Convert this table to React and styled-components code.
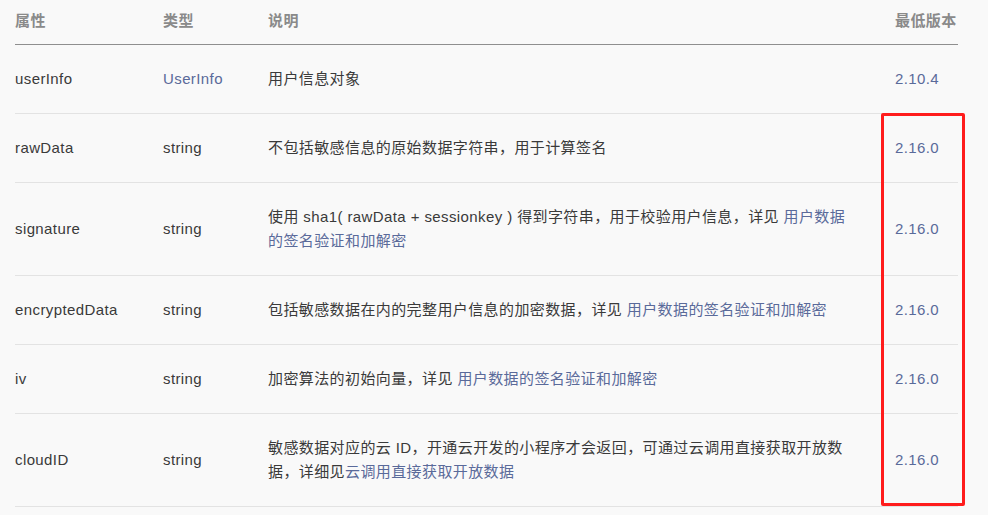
import styled, { createGlobalStyle } from "styled-components";

const GlobalStyle = createGlobalStyle`
  html, body {
    margin: 0;
    padding: 0;
    background: #f9f9f9;
  }
  body {
    font-family: "Liberation Sans", "Noto Sans CJK SC", sans-serif;
    font-size: 15px;
    letter-spacing: 0.4px;
    color: #3a3a3a;
  }
`;

const Page = styled.div`
  padding: 0 30px 0 15px;
  width: 943px;
`;

const TableWrap = styled.div`
  position: relative;
`;

const Row = styled.div`
  display: grid;
  grid-template-columns: 148px 105px 627px 63px;
  border-bottom: 1px solid ${(p) => (p.$head ? "#8f8f8f" : "#e3e3e3")};
`;

const HeadCell = styled.div`
  padding: 9px 0 11px;
  line-height: 24px;
  font-weight: bold;
  color: #8a8a8a;
  white-space: nowrap;
`;

const Cell = styled.div`
  padding: 22px ${(p) => (p.$wide ? "43px" : "0")} 22px 0;
  line-height: 24px;
  display: flex;
  align-items: center;
  color: ${(p) => (p.$link ? "#5a6a9a" : "#3a3a3a")};
`;

const Desc = styled.div``;

const Link = styled.span`
  color: #5a6a9a;
`;

const Highlight = styled.div`
  position: absolute;
  left: 866px;
  top: 113px;
  width: 78px;
  height: 387px;
  border: 3px solid #ff1c1c;
  border-radius: 2px;
`;

const SIGN = "用户数据的签名验证和加解密";

const rows = [
  { name: "userInfo", type: "UserInfo", typeLink: true, desc: <>用户信息对象</>, ver: "2.10.4" },
  { name: "rawData", type: "string", desc: <>不包括敏感信息的原始数据字符串，用于计算签名</>, ver: "2.16.0" },
  {
    name: "signature",
    type: "string",
    desc: (
      <>
        使用 sha1( rawData + sessionkey ) 得到字符串，用于校验用户信息，详见 <Link>{SIGN}</Link>
      </>
    ),
    ver: "2.16.0",
  },
  {
    name: "encryptedData",
    type: "string",
    desc: (
      <>
        包括敏感数据在内的完整用户信息的加密数据，详见 <Link>{SIGN}</Link>
      </>
    ),
    ver: "2.16.0",
  },
  {
    name: "iv",
    type: "string",
    desc: (
      <>
        加密算法的初始向量，详见 <Link>{SIGN}</Link>
      </>
    ),
    ver: "2.16.0",
  },
  {
    name: "cloudID",
    type: "string",
    desc: (
      <>
        敏感数据对应的云 ID，开通云开发的小程序才会返回，可通过云调用直接获取开放数据，详细见<Link>云调用直接获取开放数据</Link>
      </>
    ),
    ver: "2.16.0",
  },
];

export default function App() {
  return (
    <Page>
      <GlobalStyle />
      <TableWrap>
        <Row $head>
          <HeadCell>属性</HeadCell>
          <HeadCell>类型</HeadCell>
          <HeadCell>说明</HeadCell>
          <HeadCell>最低版本</HeadCell>
        </Row>
        {rows.map((r) => (
          <Row key={r.name}>
            <Cell>{r.name}</Cell>
            <Cell $link={r.typeLink}>{r.type}</Cell>
            <Cell $wide>
              <Desc>{r.desc}</Desc>
            </Cell>
            <Cell $link>{r.ver}</Cell>
          </Row>
        ))}
        <Highlight />
      </TableWrap>
    </Page>
  );
}
